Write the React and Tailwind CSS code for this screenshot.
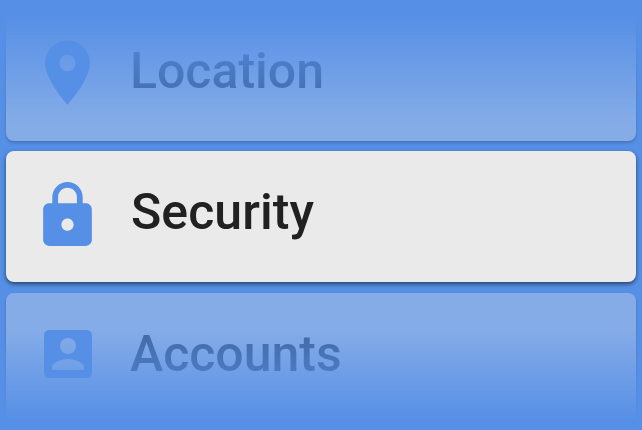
const ICONS = {
  location:
    "M12 2C8.13 2 5 5.13 5 9c0 5.25 7 13 7 13s7-7.75 7-13c0-3.87-3.13-7-7-7zm0 9.5c-1.38 0-2.5-1.12-2.5-2.5s1.12-2.5 2.5-2.5 2.5 1.12 2.5 2.5-1.12 2.5-2.5 2.5z",
  lock: "M18 8h-1V6c0-2.76-2.24-5-5-5S7 3.24 7 6v2H6c-1.1 0-2 .9-2 2v10c0 1.1.9 2 2 2h12c1.1 0 2-.9 2-2V10c0-1.1-.9-2-2-2zm-6 9c-1.1 0-2-.9-2-2s.9-2 2-2 2 .9 2 2-.9 2-2 2zm3.1-9H8.9V6c0-1.71 1.39-3.1 3.1-3.1s3.1 1.39 3.1 3.1v2z",
  account:
    "M3 5v14c0 1.1.89 2 2 2h14c1.1 0 2-.9 2-2V5c0-1.1-.9-2-2-2H5c-1.11 0-2 .9-2 2zm12 4c0 1.66-1.34 3-3 3s-3-1.34-3-3 1.34-3 3-3 3 1.34 3 3zm-9 8c0-2 4-3.1 6-3.1s6 1.1 6 3.1v1H6v-1z",
};

function Card({ icon, iconClass, label, className, labelClass }) {
  return (
    <div
      className={`flex h-[131px] w-[630px] shrink-0 items-start rounded-lg bg-[#eaeaea] ${className}`}
    >
      <div className="flex w-[124px] shrink-0">
        <svg viewBox="0 0 24 24" fill="#568fe6" className={`shrink-0 ${iconClass}`}>
          <path d={ICONS[icon]} />
        </svg>
      </div>
      <span className={`mt-[31px] text-[50px] leading-[60px] font-medium ${labelClass}`}>
        {label}
      </span>
    </div>
  );
}

export default function App() {
  return (
    <main className="flex h-[430px] w-[642px] flex-col overflow-hidden bg-[#568fe6] px-1.5 font-[Roboto,sans-serif]">
      <div className="-mx-1.5 px-1.5 pt-2.5 pb-1.5 opacity-[0.32] [mask-image:linear-gradient(to_bottom,transparent_14px,black_125px)]">
        <Card
          icon="location"
          label="Location"
          iconClass="mt-[24px] ml-[23px] size-[77px]"
          labelClass="text-[#0c0c0c]"
          className="shadow-[0_2px_3px_rgba(0,0,0,0.6)]"
        />
      </div>
      <div className="mt-1 flex">
        <Card
          icon="lock"
          label="Security"
          iconClass="mt-[28px] ml-[25px] size-[73px]"
          labelClass="ml-px tracking-[0.05px] text-[#212121]"
          className="shadow-[0_2px_4px_rgba(0,0,0,0.55)]"
        />
      </div>
      <div className="-mx-1.5 mt-1 h-[144px] px-1.5 pt-[7px] opacity-[0.32] [mask-image:linear-gradient(to_bottom,black_42px,transparent_136px)]">
        <Card
          icon="account"
          label="Accounts"
          iconClass="mt-[29px] ml-[30px] size-16"
          labelClass="text-[#181818]"
          className="shadow-[0_2px_3px_rgba(0,0,0,0.6)]"
        />
      </div>
    </main>
  );
}
